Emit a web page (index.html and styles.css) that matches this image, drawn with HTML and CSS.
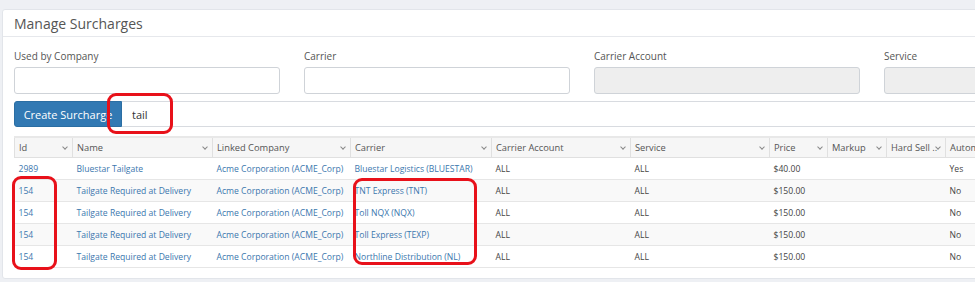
FILE: index.html
```html
<!DOCTYPE html>
<html>
<head>
	<meta charset="utf-8">
	<title>Manage Surcharges</title>
	<link rel="stylesheet" href="styles.css">
</head>
<body>

<section class="panel">
	<div class="panel-head">
		<h2>Manage Surcharges</h2>
	</div>
	<div class="panel-body">
		<div class="filters">
			<div class="field">
				<label>Used by Company</label>
				<input type="text">
			</div>
			<div class="field">
				<label>Carrier</label>
				<input type="text">
			</div>
			<div class="field">
				<label>Carrier Account</label>
				<input type="text" disabled>
			</div>
			<div class="field">
				<label>Service</label>
				<input type="text" disabled>
			</div>
		</div>

		<div class="toolbar">
			<button class="btn-primary">Create Surcharge</button>
			<input class="search" type="text" value="tail">
			<span class="mark mark-search"></span>
		</div>

		<div class="grid-wrap">
			<table class="grid">
				<colgroup>
					<col style="width:58px">
					<col style="width:140px">
					<col style="width:138px">
					<col style="width:141px">
					<col style="width:139px">
					<col style="width:139px">
					<col style="width:58px">
					<col style="width:59px">
					<col style="width:59px">
					<col style="width:80px">
				</colgroup>
				<thead>
					<tr>
						<th>Id<i class="chev"></i></th>
						<th>Name<i class="chev"></i></th>
						<th>Linked Company<i class="chev"></i></th>
						<th>Carrier<i class="chev"></i></th>
						<th>Carrier Account<i class="chev"></i></th>
						<th>Service<i class="chev"></i></th>
						<th>Price<i class="chev"></i></th>
						<th>Markup<i class="chev"></i></th>
						<th>Hard Sell ..<i class="chev"></i></th>
						<th>Automatic<i class="chev"></i></th>
					</tr>
				</thead>
				<tbody>
					<tr>
						<td><a>2989</a></td>
						<td><a>Bluestar Tailgate</a></td>
						<td><a>Acme Corporation (ACME_Corp)</a></td>
						<td><a>Bluestar Logistics (BLUESTAR)</a></td>
						<td>ALL</td>
						<td>ALL</td>
						<td>$40.00</td>
						<td></td>
						<td></td>
						<td>Yes</td>
					</tr>
					<tr>
						<td><a>154</a></td>
						<td><a>Tailgate Required at Delivery</a></td>
						<td><a>Acme Corporation (ACME_Corp)</a></td>
						<td><a>TNT Express (TNT)</a></td>
						<td>ALL</td>
						<td>ALL</td>
						<td>$150.00</td>
						<td></td>
						<td></td>
						<td>No</td>
					</tr>
					<tr>
						<td><a>154</a></td>
						<td><a>Tailgate Required at Delivery</a></td>
						<td><a>Acme Corporation (ACME_Corp)</a></td>
						<td><a>Toll NQX (NQX)</a></td>
						<td>ALL</td>
						<td>ALL</td>
						<td>$150.00</td>
						<td></td>
						<td></td>
						<td>No</td>
					</tr>
					<tr>
						<td><a>154</a></td>
						<td><a>Tailgate Required at Delivery</a></td>
						<td><a>Acme Corporation (ACME_Corp)</a></td>
						<td><a>Toll Express (TEXP)</a></td>
						<td>ALL</td>
						<td>ALL</td>
						<td>$150.00</td>
						<td></td>
						<td></td>
						<td>No</td>
					</tr>
					<tr>
						<td><a>154</a></td>
						<td><a>Tailgate Required at Delivery</a></td>
						<td><a>Acme Corporation (ACME_Corp)</a></td>
						<td><a>Northline Distribution (NL)</a></td>
						<td>ALL</td>
						<td>ALL</td>
						<td>$150.00</td>
						<td></td>
						<td></td>
						<td>No</td>
					</tr>
				</tbody>
			</table>
			<span class="mark mark-id"></span>
			<span class="mark mark-carrier"></span>
		</div>
	</div>
</section>

</body>
</html>
```

FILE: styles.css
```css
body {
	margin: 0;
	padding: 9px 0 0 2px;
	background-color: #eef0f4;
	font-family: 'Open Sans', 'Liberation Sans', sans-serif;
	color: #555;
	overflow: hidden;
}

.panel {
	width: 1200px;
	background-color: #fff;
	border: 1px solid #e2e5ea;
	border-radius: 3px;
}

.panel-head {
	height: 26px;
	padding: 0 11px;
	border-bottom: 1px solid #e6e8ec;
}

.panel-head h2 {
	margin: 0;
	font-size: 14px;
	font-weight: normal;
	line-height: 27px;
}

.panel-body {
	padding: 11px 11px 10px;
}

.filters {
	display: flex;
	gap: 24px;
}

.field {
	display: flex;
	flex-direction: column;
	width: 266px;
}

.field label {
	font-size: 10px;
	line-height: 16px;
	margin-bottom: 3px;
}

.field input {
	height: 27px;
	box-sizing: border-box;
	border: 1px solid #cfd3d8;
	border-radius: 3px;
	background: #fff;
}

.field input:disabled {
	background: #eeeeee;
}

.toolbar {
	position: relative;
	display: flex;
	margin-top: 7px;
	height: 26px;
}

.btn-primary {
	width: 108px;
	height: 26px;
	padding: 0;
	border: 1px solid #2b6ea3;
	border-radius: 3px 0 0 3px;
	background-color: #3279b3;
	color: #fff;
	font-family: inherit;
	font-size: 11px;
}

.search {
	flex: 1;
	height: 26px;
	box-sizing: border-box;
	margin: 0;
	padding: 0 10px;
	border: 1px solid #d8dbe0;
	border-left: none;
	font-family: inherit;
	font-size: 11px;
	color: #333;
	outline: none;
}

.grid-wrap {
	position: relative;
	margin-top: 9px;
}

.grid {
	width: 1011px;
	border-collapse: collapse;
	table-layout: fixed;
	font-size: 8.6px;
}

.grid th {
	position: relative;
	height: 19px;
	padding: 0 4px;
	line-height: 12px;
	text-align: left;
	font-weight: normal;
	font-size: 9.3px;
	color: #555;
	background: #f6f6f6;
	border: 1px solid #e0e0e0;
	border-top: 2px solid #e8e8e8;
	white-space: nowrap;
	overflow: hidden;
}

.chev {
	position: absolute;
	right: 5px;
	top: 7px;
	width: 3px;
	height: 3px;
	border-right: 1px solid #888;
	border-bottom: 1px solid #888;
	transform: rotate(45deg);
}

.grid td {
	height: 21px;
	padding: 0 4px;
	line-height: 12px;
	border-bottom: 1px solid #e6e6e6;
	white-space: nowrap;
	overflow: hidden;
	color: #444;
}

.grid tbody tr:nth-child(even) td {
	background: #f9f9f9;
}

.grid a {
	color: #3b77ae;
}

.mark {
	position: absolute;
	border: 3px solid #e8111a;
	border-radius: 9px;
	box-sizing: border-box;
}

.mark-search {
	left: 93px;
	top: -8px;
	width: 66px;
	height: 41px;
}

.mark-id {
	left: -2px;
	top: 40px;
	width: 45px;
	height: 94px;
}

.mark-carrier {
	left: 339px;
	top: 42px;
	width: 124px;
	height: 87px;
}
```
